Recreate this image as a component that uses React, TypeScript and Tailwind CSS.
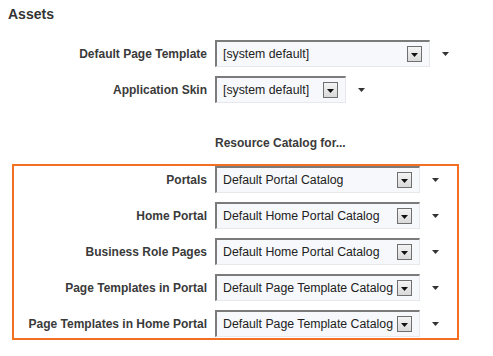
const font = { fontFamily: '"Liberation Sans", Arial, sans-serif' };

function Arrow() {
  return (
    <svg width="7" height="4" viewBox="0 0 7 4" className="block">
      <path d="M0 0H7L3.5 4Z" fill="#333" />
    </svg>
  );
}

function Select({ value, width }: { value: string; width: string }) {
  return (
    <div
      className={`${width} h-[27px] flex items-center justify-between pl-[6px] pr-[7px] bg-[#f6f8fb] border-t-2 border-l-2 border-r border-b border-t-[#7b7b7b] border-l-[#7b7b7b] border-r-[#e6e8ec] border-b-[#e6e8ec]`}
    >
      <span className="text-[12.3px] text-[#222] whitespace-nowrap overflow-hidden">{value}</span>
      <span className="shrink-0 w-[15px] h-[16px] flex items-end justify-center pb-[4px] border border-[#6f6f6f] bg-gradient-to-b from-[#f4f4f4] to-[#d9d9d9]">
        <svg width="7" height="4" viewBox="0 0 7 4" className="block">
          <path d="M0 0H7L3.5 4Z" fill="#111" />
        </svg>
      </span>
    </div>
  );
}

function Row({ label, value, width }: { label: string; value: string; width: string }) {
  return (
    <div className="flex items-center">
      <div className="w-[201px] pr-[8px] text-right text-[12px] font-bold text-[#3a3a3a] whitespace-nowrap">{label}</div>
      <Select value={value} width={width} />
      <div className="ml-[12px]">
        <Arrow />
      </div>
    </div>
  );
}

export default function App() {
  const catalogs = [
    { label: 'Portals', value: 'Default Portal Catalog' },
    { label: 'Home Portal', value: 'Default Home Portal Catalog' },
    { label: 'Business Role Pages', value: 'Default Home Portal Catalog' },
    { label: 'Page Templates in Portal', value: 'Default Page Template Catalog' },
    { label: 'Page Templates in Home Portal', value: 'Default Page Template Catalog' },
  ];

  return (
    <div className="w-[493px] h-[356px] bg-white pt-[6px]" style={font}>
      <h2 className="ml-[8px] text-[14px] leading-[16px] font-bold text-[#333]">Assets</h2>

      <div className="mt-[18px] ml-[14px] flex flex-col gap-[9px]">
        <Row label="Default Page Template" value="[system default]" width="w-[215px]" />
        <Row label="Application Skin" value="[system default]" width="w-[131px]" />
      </div>

      <div className="mt-[33px] ml-[215px] text-[12px] leading-[14px] font-bold text-[#3a3a3a]">Resource Catalog for...</div>

      <div className="mt-[14px] ml-[12px] w-[447px] border-2 border-[#f36f21] pb-[1px] flex flex-col gap-[9px]">
        {catalogs.map((c) => (
          <Row key={c.label} label={c.label} value={c.value} width="w-[205px]" />
        ))}
      </div>
    </div>
  );
}
